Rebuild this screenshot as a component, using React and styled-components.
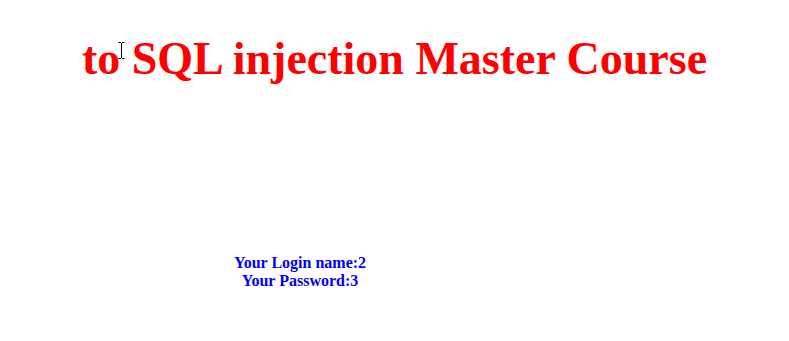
import React from 'react';
import styled, { createGlobalStyle } from 'styled-components';

const GlobalStyle = createGlobalStyle`
  html, body { margin: 0; padding: 0; background: #fff; }
  body { font-family: "Liberation Serif", "Times New Roman", serif; }
`;

function App() {
  return (
    <Page>
      <GlobalStyle />
      <Title>to SQL injection Master Course</Title>
      <Info>
        <InfoLine>Your Login name:2</InfoLine>
        <InfoLine>Your Password:3</InfoLine>
      </Info>
      <Cursor width="7" height="17" viewBox="0 0 7 17">
        <path d="M0.5 0.5h2.5M4 0.5h2.5M3.5 1v15M0.5 16.5h2.5M4 16.5h2.5" stroke="#000" strokeWidth="1" fill="none" />
      </Cursor>
    </Page>
  );
}

// --- styles ---

const Page = styled.div`
  position: relative;
  width: 789px; height: 341px;
  padding-top: 32px; box-sizing: border-box;
`;

const Title = styled.div`
  text-align: center;
  font-size: 46px; font-weight: bold; color: #ff0000;
`;

const Info = styled.div`
  width: 600px; margin-top: 169px;
  text-align: center;
  font-size: 16px; font-weight: bold; color: #0000ff;
`;

const InfoLine = styled.div``;

const Cursor = styled.svg`
  position: absolute; left: 118px; top: 42px;
`;

export default App;
